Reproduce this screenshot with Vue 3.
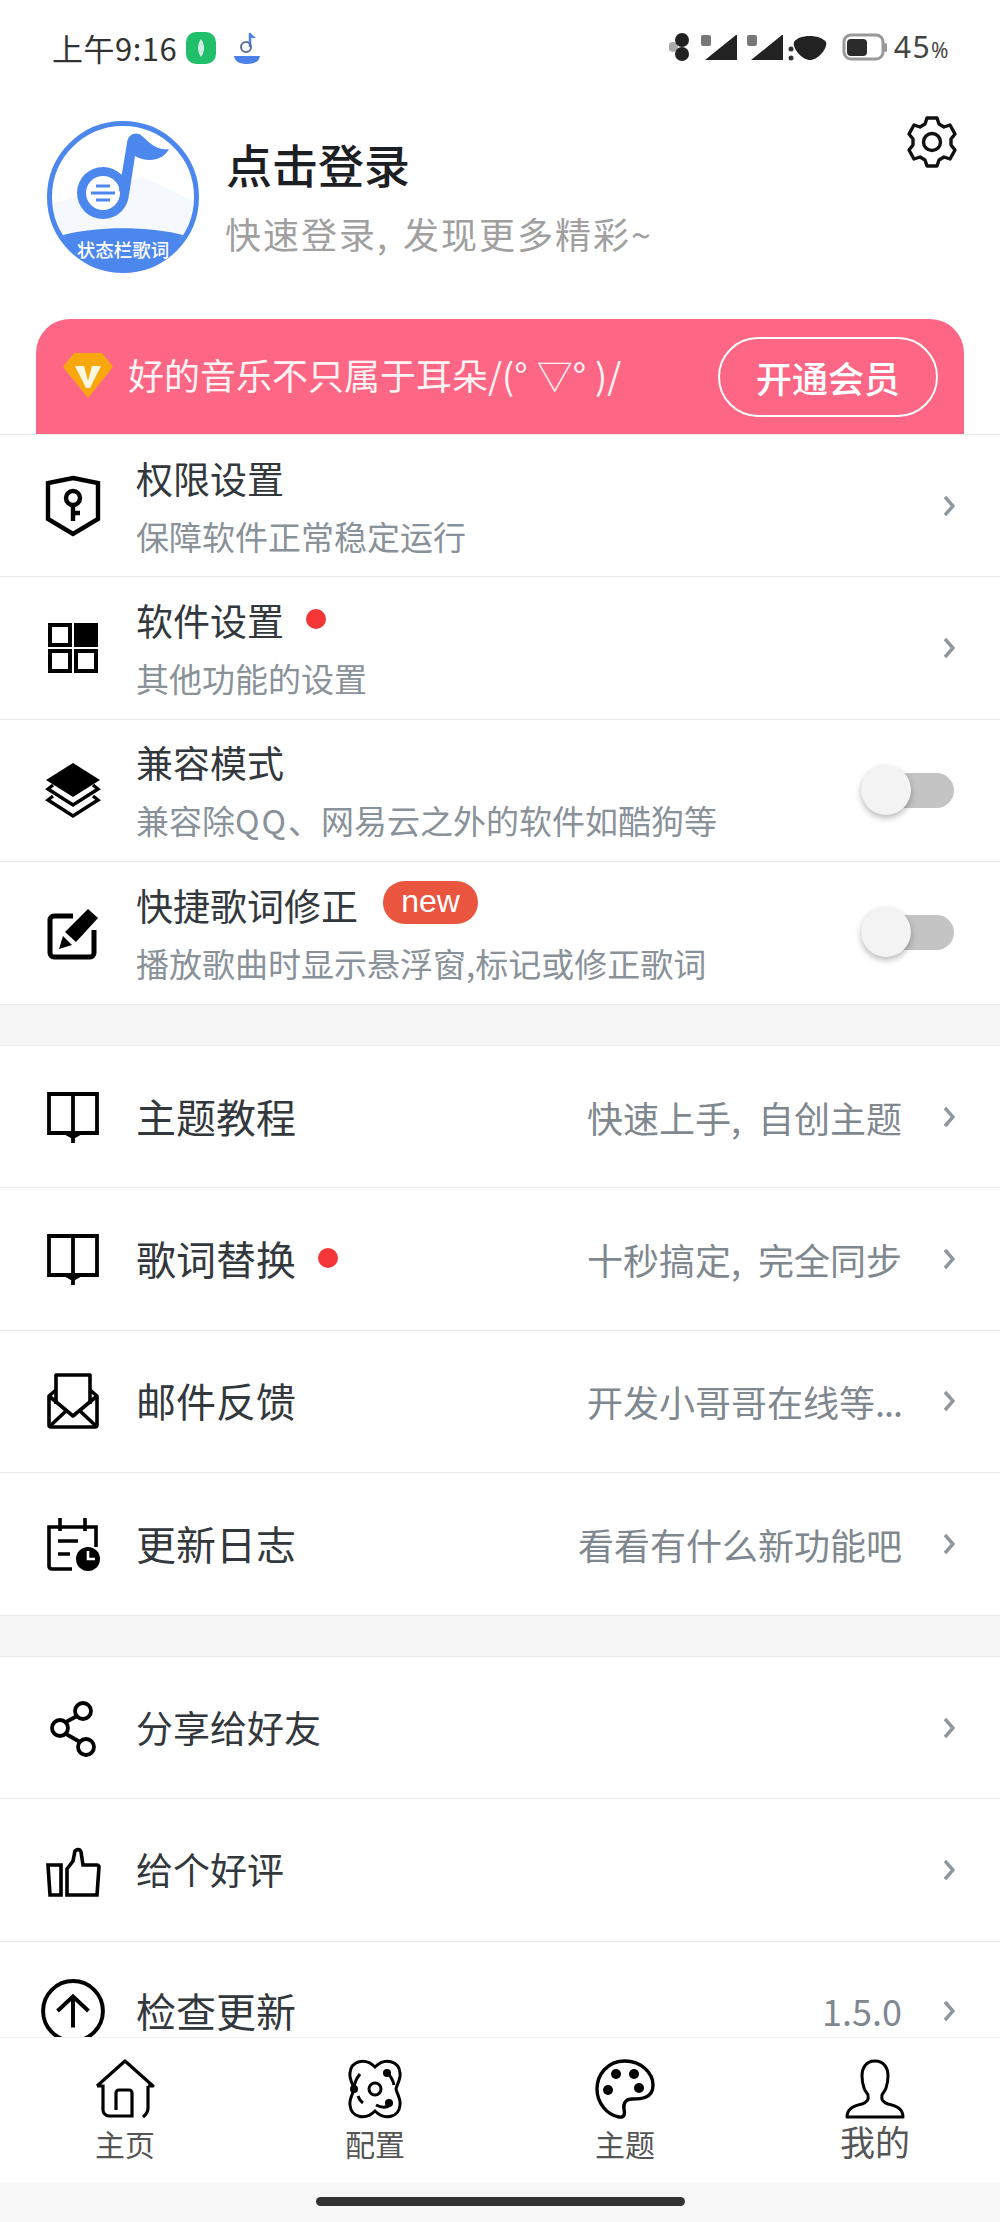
<template>
  <div class="page">
    <div class="scroll">
      <header class="status">
        <span class="time">上午9:16</span>
        <svg class="s-app" viewBox="0 0 30 32"><rect width="30" height="32" rx="10" fill="#1fbf6c" /><path d="M15 7c4 5 4 13 0 18-4-5-4-13 0-18z" fill="#cdeedd" /></svg>
        <svg class="s-note" viewBox="0 0 30 34">
          <path d="M18 2v14" stroke="#4a80e8" stroke-width="2.5" fill="none" />
          <path d="M18 2l6 5-6 0z" fill="#4a80e8" />
          <circle cx="14" cy="16" r="5" fill="none" stroke="#5b6f9c" stroke-width="2" />
          <path d="M2 25h26c-1 6-6 8-13 8S3 31 2 25z" fill="#4a80e8" />
        </svg>
        <span class="spacer"></span>
        <svg class="s-sys" viewBox="0 0 158 28">
          <circle cx="4" cy="14" r="5" fill="#aaa" />
          <circle cx="13" cy="7" r="7" fill="#222" />
          <circle cx="13" cy="21" r="7" fill="#222" />
          <rect x="32" y="2" width="10" height="11" rx="2" fill="#777" />
          <path d="M36 27L67 2h1v25z" fill="#222" />
          <rect x="78" y="2" width="10" height="11" rx="2" fill="#777" />
          <path d="M82 27L113 2h1v25z" fill="#222" />
          <circle cx="122" cy="16" r="2.5" fill="#333" />
          <circle cx="122" cy="25" r="2.5" fill="#333" />
          <path d="M125 9c5-8 26-8 32 0 2 6-8 18-16 18s-18-12-16-18z" fill="#222" />
        </svg>
        <svg class="s-bat" viewBox="0 0 46 28">
          <rect x="2" y="2" width="39" height="24" rx="7" fill="#fff" stroke="#999" stroke-width="3" />
          <rect x="5" y="6" width="20" height="17" rx="4" fill="#2b2b2b" />
          <rect x="42" y="10" width="3" height="9" rx="1.5" fill="#999" />
        </svg>
        <span class="battery">45<small>%</small></span>
      </header>

      <section class="profile">
        <svg class="avatar" viewBox="0 0 152 152">
          <circle cx="76" cy="76" r="73.5" fill="#fff" stroke="#4c87ee" stroke-width="5" />
          <path d="M6 82c30-6 60-20 90-26l50 24c0 12-4 24-10 34H17C11 104 7 94 6 82z" fill="#f5f9fe" />
          <path d="M16 114c34-9 86-9 120 0-12 22-35 36-60 36s-48-14-60-36z" fill="#4c87ee" />
          <circle cx="56" cy="72" r="26" fill="#4c87ee" />
          <circle cx="56" cy="72" r="17" fill="#fff" />
          <path d="M49 65h14M44 72h24M49 79h14" stroke="#4c87ee" stroke-width="3" fill="none" />
          <path d="M72 70L80 22C81 13 89 10 95 15 103 22 110 30 122 28 116 40 100 42 88 35L82 74z" fill="#4c87ee" />
          <text x="76" y="136" class="avatar-text" text-anchor="middle">状态栏歌词</text>
        </svg>
        <div class="profile-text">
          <div class="login">点击登录</div>
          <div class="login-sub">快速登录, 发现更多精彩~</div>
        </div>
        <svg class="gear" viewBox="0 0 52 52" fill="none" stroke="#111" stroke-width="3.4" stroke-linejoin="round">
          <path d="M21 2h10l2 6 5 3 6-2 5 9-4 5v6l4 5-5 9-6-2-5 3-2 6H21l-2-6-5-3-6 2-5-9 4-5v-6l-4-5 5-9 6 2 5-3z" />
          <circle cx="26" cy="26" r="8.5" />
        </svg>
      </section>

      <section class="vip">
        <svg class="diamond" viewBox="0 0 50 46">
          <path d="M11 1h28l11 14-25 31L0 15z" fill="#f9a70e" />
          <path d="M12 14h9l4 15 4-15h9L27 36h-4z" fill="#fff8e0" />
        </svg>
        <span class="vip-text">好的音乐不只属于耳朵/(° ▽° )/</span>
        <span class="vip-btn">开通会员</span>
      </section>

      <div class="group">
        <div class="row">
          <svg class="icon i60" viewBox="0 0 54 60" fill="none" stroke="#000" stroke-width="4.4">
            <path d="M27 2l25 5v36L27 58 2 43V7z" />
            <circle cx="27" cy="22" r="7" />
            <path d="M27 29v16M27 37h7" />
          </svg>
          <div class="texts">
            <div class="title">权限设置</div>
            <div class="sub">保障软件正常稳定运行</div>
          </div>
          <svg class="chev" viewBox="0 0 12 22"><path d="M2 2l8 9-8 9" /></svg>
        </div>
        <div class="row">
          <svg class="icon" viewBox="0 0 54 54" fill="none" stroke="#000" stroke-width="4">
            <rect x="4" y="4" width="20" height="20" />
            <rect x="30" y="4" width="20" height="20" fill="#000" />
            <rect x="4" y="30" width="20" height="20" />
            <rect x="30" y="30" width="20" height="20" />
          </svg>
          <div class="texts">
            <div class="title">软件设置<i class="dot"></i></div>
            <div class="sub">其他功能的设置</div>
          </div>
          <svg class="chev" viewBox="0 0 12 22"><path d="M2 2l8 9-8 9" /></svg>
        </div>
        <div class="row">
          <svg class="icon" viewBox="0 0 54 54">
            <path d="M27 0l27 17-27 17L0 17z" fill="#000" />
            <path d="M7 22L2 26l25 16 25-16-5-4" fill="none" stroke="#000" stroke-width="3.4" />
            <path d="M7 33l-5 4 25 16 25-16-5-4" fill="none" stroke="#000" stroke-width="3.4" />
          </svg>
          <div class="texts">
            <div class="title">兼容模式</div>
            <div class="sub">兼容除<span class="qq">QQ</span>、网易云之外的软件如酷狗等</div>
          </div>
          <span class="switch"><span class="knob"></span></span>
        </div>
        <div class="row">
          <svg class="icon" viewBox="0 0 54 54">
            <path d="M27 10H8a4 4 0 0 0-4 4v33a4 4 0 0 0 4 4h36a4 4 0 0 0 4-4V24" fill="none" stroke="#000" stroke-width="5" />
            <path d="M42 3l10 9-22 24-11-10z" fill="#000" />
            <path d="M17 30l9 9-13 4z" fill="#000" />
          </svg>
          <div class="texts">
            <div class="title">快捷歌词修正<b class="badge">new</b></div>
            <div class="sub">播放歌曲时显示悬浮窗,标记或修正歌词</div>
          </div>
          <span class="switch"><span class="knob"></span></span>
        </div>
      </div>

      <div class="gap"></div>

      <div class="group">
        <div class="row">
          <svg class="icon" viewBox="0 0 54 54" fill="none" stroke="#000" stroke-width="3.8">
            <path d="M3 4h24v39H3zM27 4h24v39H27" />
            <path d="M20 43l7 4 7-4M27 43v10" />
          </svg>
          <span class="title big">主题教程</span>
          <span class="spacer"></span>
          <span class="hint">快速上手, 自创主题</span>
          <svg class="chev" viewBox="0 0 12 22"><path d="M2 2l8 9-8 9" /></svg>
        </div>
        <div class="row">
          <svg class="icon" viewBox="0 0 54 54" fill="none" stroke="#000" stroke-width="3.8">
            <path d="M3 4h24v39H3zM27 4h24v39H27" />
            <path d="M20 43l7 4 7-4M27 43v10" />
          </svg>
          <span class="title big">歌词替换<i class="dot wide"></i></span>
          <span class="spacer"></span>
          <span class="hint">十秒搞定, 完全同步</span>
          <svg class="chev" viewBox="0 0 12 22"><path d="M2 2l8 9-8 9" /></svg>
        </div>
        <div class="row">
          <svg class="icon i58" viewBox="0 0 54 58" fill="none" stroke="#000" stroke-width="3.6" stroke-linejoin="round">
            <path d="M10 32V3h34v29" />
            <path d="M10 18l-7 6v29q0 2 2 2h44q2 0 2-2V24l-7-6" />
            <path d="M3 24l24 20 24-20" />
            <path d="M4 54l16-15M50 54L34 39" />
          </svg>
          <span class="title big">邮件反馈</span>
          <span class="spacer"></span>
          <span class="hint">开发小哥哥在线等<span class="dots">...</span></span>
          <svg class="chev" viewBox="0 0 12 22"><path d="M2 2l8 9-8 9" /></svg>
        </div>
        <div class="row">
          <svg class="icon" viewBox="0 0 54 54" fill="none" stroke="#000" stroke-width="3.6">
            <path d="M26 52H6q-3 0-3-3V10h47v20" />
            <path d="M14 1v13M39 1v13" />
            <path d="M12 24h20M12 37h12" />
            <circle cx="42" cy="42" r="12" fill="#000" stroke="none" />
            <path d="M42 34v8h7" stroke="#fff" stroke-width="2.6" />
          </svg>
          <span class="title big">更新日志</span>
          <span class="spacer"></span>
          <span class="hint">看看有什么新功能吧</span>
          <svg class="chev" viewBox="0 0 12 22"><path d="M2 2l8 9-8 9" /></svg>
        </div>
      </div>

      <div class="gap"></div>

      <div class="group last">
        <div class="row">
          <svg class="icon" viewBox="0 0 54 54" fill="none" stroke="#000" stroke-width="3.8">
            <circle cx="37" cy="10" r="8" />
            <circle cx="14" cy="27" r="8" />
            <circle cx="40" cy="46" r="8" />
            <path d="M20 21l11-6M20 33l14 8" />
          </svg>
          <span class="title sm">分享给好友</span>
          <span class="spacer"></span>
          <svg class="chev" viewBox="0 0 12 22"><path d="M2 2l8 9-8 9" /></svg>
        </div>
        <div class="row">
          <svg class="icon" viewBox="0 0 54 54" fill="none" stroke="#000" stroke-width="3.6" stroke-miterlimit="3">
            <path d="M2 22h13v30H4z" />
            <path d="M21 52V26l6-8 2-10c2-2 5-2 6 1l2 13h14c1 0 2 1 2 2l-2 28z" />
          </svg>
          <span class="title sm">给个好评</span>
          <span class="spacer"></span>
          <svg class="chev" viewBox="0 0 12 22"><path d="M2 2l8 9-8 9" /></svg>
        </div>
        <div class="row cut">
          <svg class="icon large" viewBox="0 0 62 56.2" fill="none" stroke="#000" stroke-width="3.8">
            <circle cx="31" cy="31" r="29" />
            <path d="M31 47V17M16 31l15-14 15 14" />
          </svg>
          <span class="title big">检查更新</span>
          <span class="spacer"></span>
          <span class="hint">1.5.0</span>
          <svg class="chev" viewBox="0 0 12 22"><path d="M2 2l8 9-8 9" /></svg>
        </div>
      </div>
    </div>

    <nav class="tabs">
      <div class="tab">
        <svg viewBox="0 0 60 60" fill="none" stroke="#000" stroke-width="3.2">
          <path d="M2 27L30 2l28 25H53" stroke-linejoin="round" />
          <path d="M2 27H8V51a6 6 0 0 0 6 6H37V34a3 3 0 0 0-3-3H24a3 3 0 0 0-3 3V51" />
          <path d="M53 27V49Q53 54 48 58" />
        </svg>
        <span>主页</span>
      </div>
      <div class="tab">
        <svg viewBox="0 0 60 60" fill="none" stroke="#000" stroke-width="3">
          <path d="M30 8C20-2 6 2 5 14c-1 6 3 11 4 16-1 5-5 10-4 16 1 12 15 16 25 6 10 10 24 6 25-6 1-6-3-11-4-16 1-5 5-10 4-16C54 2 40-2 30 8z" />
          <circle cx="30" cy="30" r="6" />
          <path d="M15 15c-4 5-6 10-6 15M41 12c5 5 7 9 8 14M45 46c-5 4-10 2-14 0M18 44c-3-2-4-4-5-7" />
          <circle cx="42" cy="14" r="4" fill="#000" stroke="none" />
          <circle cx="9" cy="30" r="4" fill="#000" stroke="none" />
          <circle cx="44" cy="44" r="4" fill="#000" stroke="none" />
        </svg>
        <span>配置</span>
      </div>
      <div class="tab">
        <svg viewBox="0 0 60 60" fill="none" stroke="#000" stroke-width="3.4">
          <path d="M30 2C12 2 2 16 2 30c0 14 10 26 22 28 6 1 6-4 5-8-1-6 2-10 8-10 8 0 21 0 21-14C58 14 46 2 30 2z" />
          <circle cx="21" cy="15" r="5" fill="#000" stroke="none" />
          <circle cx="39" cy="15" r="5" fill="#000" stroke="none" />
          <circle cx="13" cy="31" r="5" fill="#000" stroke="none" />
          <circle cx="44" cy="29" r="5" fill="#000" stroke="none" />
        </svg>
        <span>主题</span>
      </div>
      <div class="tab">
        <svg viewBox="0 0 60 60" fill="none" stroke="#000" stroke-width="3">
          <path d="M30 2c-9 0-13 7-13 15 0 5 1 9 2 12 1 3 3 5 4 7 1 5-1 7-6 9-9 2-15 5-15 13h56c0-8-6-11-15-13-5-2-7-4-6-9 1-2 3-4 4-7 1-3 2-7 2-12 0-8-4-15-13-15z" stroke-linejoin="round" />
        </svg>
        <span class="mine">我的</span>
      </div>
    </nav>
    <div class="navbar"><span class="handle"></span></div>
  </div>
</template>

<script setup>
</script>

<style>
html, body { margin: 0; background: #fff; }
</style>

<style scoped>
.page {
  width: 1000px;
  height: 2222px;
  display: flex;
  flex-direction: column;
  overflow: hidden;
  background: #fff;
  font-family: "Noto Sans CJK SC", "Noto Sans", sans-serif;
  color: #33383d;
}
.scroll { flex: 1; min-height: 0; }
.spacer { flex: 1; }

.status {
  height: 96px;
  box-sizing: border-box;
  padding: 30px 50px 0 52px;
  display: flex;
  align-items: flex-start;
}
.time { font-size: 31px; line-height: 36px; color: #333; letter-spacing: 0.5px; }
.s-app { width: 30px; height: 32px; margin-left: 9px; margin-top: 2px; }
.s-note { width: 30px; height: 34px; margin-left: 16px; margin-top: 1px; }
.s-sys { width: 158px; height: 28px; margin-top: 3px; }
.s-bat { width: 46px; height: 28px; margin-top: 3px; margin-left: 15px; }
.battery { font-family: "Noto Sans", sans-serif; font-size: 30px; line-height: 34px; color: #444; margin-left: 6px; letter-spacing: 1.5px; }
.battery small { font-size: 21px; }

.profile {
  height: 223px;
  box-sizing: border-box;
  padding: 25px 42px 0 47px;
  display: flex;
  align-items: flex-start;
}
.avatar { width: 152px; height: 152px; flex: none; }
.avatar-text { font-size: 18.5px; font-weight: 500; fill: #fff; }
.profile-text { margin-left: 27px; flex: 1; padding-top: 12px; }
.login { font-size: 46px; line-height: 60px; font-weight: 500; color: #1d2023; }
.login-sub { font-size: 36px; line-height: 50px; color: #a0a0a0; margin-top: 15px; letter-spacing: 2px; word-spacing: 4px; white-space: nowrap; margin-left: -1px; }
.gear { width: 52px; height: 52px; margin-top: -5px; }

.vip {
  margin: 0 36px;
  height: 115px;
  box-sizing: border-box;
  padding: 0 26px 0 27px;
  background: #fd6684;
  border-radius: 34px 34px 0 0;
  display: flex;
  align-items: center;
  color: #fff;
}
.diamond { width: 50px; height: 46px; flex: none; margin-top: -4px; }
.vip-text { flex: 1; margin-left: 15px; font-size: 36px; line-height: 44px; white-space: nowrap; margin-top: -5px; color: #fff3f3; word-spacing: 1px; }
.vip-btn {
  width: 220px;
  height: 80px;
  box-sizing: border-box;
  border: 2.5px solid #fff;
  border-radius: 40px;
  font-size: 36px;
  font-weight: 500;
  display: flex;
  align-items: center;
  justify-content: center;
}

.group { border-bottom: 1px solid #ebebeb; border-top: 1px solid #ebebeb; }
.group.last { border-bottom: 0; }
.row {
  height: 142.25px;
  box-sizing: border-box;
  padding-left: 46px;
  padding-right: 45px;
  display: flex;
  align-items: center;
  border-bottom: 1.5px solid #ebebeb;
}
.row:last-child { border-bottom: 0; }
/* last row runs under the tab bar, only its top part shows */
.row.cut {
  height: 95.5px;
  align-items: flex-start;
  padding-top: 44.5px;
}
.row.cut .icon { margin-top: -7px; overflow: hidden; height: 58px; }
.row.cut .chev { margin-top: 14px; }
.icon { width: 54px; height: 54px; flex: none; margin-right: 37px; overflow: visible; }
.icon.i60 { height: 60px; }
.icon.i58 { height: 58px; }
.icon.large { width: 64px; margin-left: -5px; margin-right: 32px; }
.texts { flex: 1; min-width: 0; margin-left: -1px; }
.title {
  font-size: 37px;
  line-height: 48px;
  color: #33383d;
  display: flex;
  align-items: center;
  white-space: nowrap;
}
span.title { margin-left: -1px; padding-bottom: 2px; }
.title.big { font-size: 40px; }
.title.sm { font-size: 37px; }
.sub { font-size: 33px; line-height: 44px; color: #899199; margin-top: 12px; white-space: nowrap; }
.qq { letter-spacing: 2px; }
.hint { font-size: 36px; line-height: 48px; color: #7f878f; white-space: nowrap; margin-right: 41px; word-spacing: 9px; }
.dots { letter-spacing: -1px; }
.chev { width: 12px; height: 22px; flex: none; fill: none; stroke: #8f979e; stroke-width: 3.4; }
.dot { display: block; width: 20px; height: 20px; border-radius: 50%; background: #f53636; margin-left: 22px; margin-top: -2px; }
.dot.wide { margin-left: 22px; margin-top: 0; }
.badge {
  margin-left: 25px;
  width: 95px;
  height: 43px;
  border-radius: 22px;
  background: #e9553f;
  color: #fff;
  font-family: "Liberation Sans", sans-serif;
  font-size: 32px;
  font-weight: 400;
  line-height: 40px;
  text-align: center;
  margin-top: -4px;
}
.switch {
  width: 70px;
  height: 35px;
  margin-right: 1px;
  border-radius: 18px;
  background: #c4c4c4;
  position: relative;
  flex: none;
}
.knob {
  position: absolute;
  left: -23px;
  top: -8px;
  width: 50px;
  height: 50px;
  border-radius: 50%;
  background: #f3f3f3;
  box-shadow: 0 3px 6px rgba(0, 0, 0, 0.28);
}
.gap { height: 40px; background: #f6f6f6; }

.tabs {
  height: 145px;
  flex: none;
  display: grid;
  grid-template-columns: repeat(4, 250px);
  background: #fff;
  border-top: 1px solid #f2f2f2;
  box-sizing: border-box;
}
.tab { display: flex; flex-direction: column; align-items: center; padding-top: 21px; }
.tab svg { width: 60px; height: 60px; overflow: visible; }
.tab span { font-size: 30px; line-height: 40px; color: #555; margin-top: 4px; }
.tab span.mine { font-size: 35px; margin-top: 2px; }
.navbar {
  height: 40px;
  flex: none;
  background: #f8f8f8;
  display: flex;
  justify-content: center;
  padding-top: 15px;
  box-sizing: border-box;
}
.handle { width: 369px; height: 9px; border-radius: 5px; background: #333; }
</style>
